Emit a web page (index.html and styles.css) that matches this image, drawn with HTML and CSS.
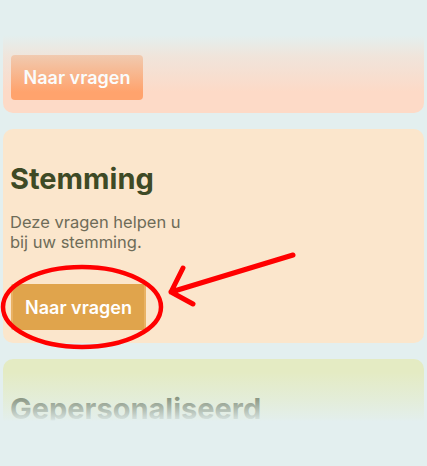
FILE: index.html
```html
<!DOCTYPE html>
<html lang="nl">
<head>
<meta charset="utf-8">
<title>Vragen</title>
<link rel="stylesheet" href="styles.css">
</head>
<body>
<div class="screen">
  <div class="list">
    <section class="card card-peach card-partial">
      <button class="btn btn-peach">Naar vragen</button>
    </section>
    <section class="card card-sand">
      <h2 class="card-title">Stemming</h2>
      <p class="card-text">Deze vragen helpen u bij uw stemming.</p>
      <button class="btn btn-sand">Naar vragen</button>
    </section>
    <section class="card card-lime">
      <h2 class="card-title">Gepersonaliseerd</h2>
    </section>
  </div>
  <div class="fade fade-top"></div>
  <div class="fade fade-bottom"></div>
  <svg class="annotation" width="427" height="466" viewBox="0 0 427 466">
    <ellipse cx="82" cy="307" rx="79" ry="40" fill="none" stroke="#ff0000" stroke-width="4.5"/>
    <path d="M293 255 L171 292 M183 268 L171 292 L193 304" fill="none" stroke="#ff0000" stroke-width="5" stroke-linecap="round" stroke-linejoin="round"/>
  </svg>
</div>
</body>
</html>
```
FILE: styles.css
```css
* { box-sizing: border-box; }
html, body {
  margin: 0;
  padding: 0;
  background: #e3efef;
  font-family: Inter, "Noto Sans", sans-serif;
}
.screen {
  position: relative;
  width: 427px;
  height: 466px;
  overflow: hidden;
}
.list {
  display: flex;
  flex-direction: column;
  gap: 16px;
  padding: 0 3px;
}
.card {
  border-radius: 10px;
  padding: 32px 7px 13px;
  display: flex;
  flex-direction: column;
  align-items: flex-start;
}
.card-partial {
  padding-top: 55px;
  border-radius: 0 0 10px 10px;
}
.card-peach { background: #fddac7; }
.card-sand { background: #fbe6cc; }
.card-lime { background: #e4ebc3; min-height: 214px; }
.card-title {
  margin: 0;
  font-size: 29px;
  line-height: 35px;
  font-weight: 700;
  color: #3e4a25;
}
.card-text {
  margin: 16px 0 0;
  max-width: 185px;
  font-size: 16.5px;
  line-height: 20px;
  color: #6e6c58;
}
.btn {
  border: none;
  height: 46px;
  font-family: inherit;
  font-size: 18px;
  font-weight: 600;
  color: #ffffff;
  padding: 0 10px;
  border-radius: 4px;
  margin-left: 1px;
}
.btn-peach {
  background: #ffa36d;
  width: 132px;
  height: 45px;
}
.btn-sand {
  background: #e0a44c;
  border-left: 2px solid #e9b264;
  border-right: 2px solid #e9b264;
  border-radius: 2px;
  width: 135px;
  margin-top: 32px;
}
.fade {
  position: absolute;
  left: 0;
  right: 0;
  pointer-events: none;
}
.fade-top {
  top: 0;
  height: 92px;
  background: linear-gradient(to bottom, #e3efef 0, #e3efef 35px, rgba(227, 239, 239, 0.5) 56px, rgba(227, 239, 239, 0) 92px);
}
.fade-bottom {
  top: 372px;
  bottom: 0;
  background: linear-gradient(to bottom, rgba(227, 239, 239, 0) 0, rgba(227, 239, 239, 0.5) 28px, rgba(227, 239, 239, 0.9) 47px, #e3efef 49px, #e3efef 100%);
}
.annotation {
  position: absolute;
  top: 0;
  left: 0;
}
```
